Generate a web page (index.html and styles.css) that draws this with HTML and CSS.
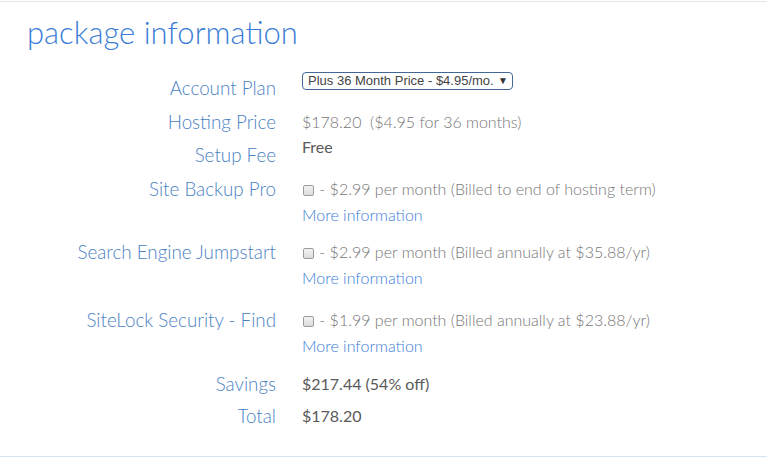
FILE: index.html
```html
<!DOCTYPE html>
<html>
<head>
<meta charset="utf-8">
<link rel="stylesheet" href="styles.css">
</head>
<body>
<div class="panel">
  <h1 class="title">package information</h1>
  <div class="rows">
    <div class="row row-plan">
      <div class="label">Account Plan</div>
      <div class="val">
        <div class="select-wrap">
          <select class="select"><option>Plus 36 Month Price - $4.95/mo.</option></select>
          <span class="arrow">▼</span>
        </div>
      </div>
    </div>
    <div class="row row-price">
      <div class="label">Hosting Price</div>
      <div class="val light">$178.20&nbsp; ($4.95 for 36 months)</div>
    </div>
    <div class="row row-setup">
      <div class="label">Setup Fee</div>
      <div class="val dark">Free</div>
    </div>
    <div class="row row-backup">
      <div class="label">Site Backup Pro</div>
      <div class="val light">
        <div><input type="checkbox" class="check"> - $2.99 per month (Billed to end of hosting term)</div>
        <a class="more" href="#">More information</a>
      </div>
    </div>
    <div class="row row-seo">
      <div class="label">Search Engine Jumpstart</div>
      <div class="val light">
        <div><input type="checkbox" class="check"> - $2.99 per month (Billed annually at $35.88/yr)</div>
        <a class="more" href="#">More information</a>
      </div>
    </div>
    <div class="row row-lock">
      <div class="label">SiteLock Security - Find</div>
      <div class="val light">
        <div><input type="checkbox" class="check"> - $1.99 per month (Billed annually at $23.88/yr)</div>
        <a class="more" href="#">More information</a>
      </div>
    </div>
    <div class="row row-save">
      <div class="label">Savings</div>
      <div class="val dark">$217.44 (54% off)</div>
    </div>
    <div class="row row-total">
      <div class="label">Total</div>
      <div class="val dark">$178.20</div>
    </div>
  </div>
</div>
</body>
</html>
```
FILE: styles.css
```css
html, body {
  margin: 0;
  padding: 0;
  background: #ffffff;
}
body {
  font-family: Lato, "Open Sans", sans-serif;
  width: 767px;
  height: 467px;
  overflow: hidden;
}
.panel {
  margin-top: 1px;
  border-top: 1px solid #dfe7ee;
  border-bottom: 1px solid #d2e5f6;
  padding-bottom: 27px;
}
.title {
  margin: 10px 0 0 0;
  padding-left: 27px;
  font-size: 31px;
  line-height: 40px;
  font-weight: 300;
  color: #3b7dd6;
}
.rows {
  margin-top: 19px;
  display: flex;
  flex-direction: column;
}
.row {
  display: grid;
  grid-template-columns: 276px 1fr;
  column-gap: 26px;
  align-items: start;
}
.label {
  text-align: right;
  font-size: 18.8px;
  line-height: 26px;
  font-weight: 300;
  color: #4a82c4;
  white-space: nowrap;
}
.val {
  font-size: 16px;
  line-height: 26px;
  font-weight: 300;
  white-space: nowrap;
}
.light { color: #767676; }
.dark { color: #5a5a5a; font-weight: 400; }
.more {
  color: #3d7dd8;
  text-decoration: none;
}
.row-plan .label { padding-top: 4px; }
.row-plan .val { padding-top: 1px; }
.row-plan { margin-bottom: 8px; }
.row-price { margin-bottom: 0; }
.row-setup .label { padding-top: 7px; }
.row-setup .val { margin-top: -1px; }
.row-setup { margin-bottom: 8px; }
.row-backup { margin-bottom: 11px; }
.row-seo { margin-bottom: 16px; }
.row-lock { margin-bottom: 12px; }
.row-save { margin-bottom: 6px; }

.select-wrap {
  position: relative;
  width: 211px;
  height: 18px;
}
.select {
  appearance: none;
  -webkit-appearance: none;
  display: block;
  box-sizing: border-box;
  width: 211px;
  height: 18px;
  margin: 0;
  padding: 0 0 0 5px;
  border: 1px solid #44679a;
  border-radius: 4px;
  background: #ffffff;
  font-family: "Liberation Sans", Arial, sans-serif;
  font-size: 13px;
  line-height: 16px;
  color: #444444;
}
.arrow {
  position: absolute;
  right: 5px;
  top: 3px;
  font-family: "DejaVu Sans", sans-serif;
  font-size: 10px;
  line-height: 11px;
  color: #333333;
  pointer-events: none;
}
.check {
  appearance: none;
  -webkit-appearance: none;
  box-sizing: border-box;
  width: 11px;
  height: 11px;
  margin: 0 1px 0 1px;
  border: 1px solid #9b9b9b;
  border-radius: 2px;
  background: linear-gradient(#f3f3f3, #dcdcdc);
  vertical-align: -1px;
}
```
